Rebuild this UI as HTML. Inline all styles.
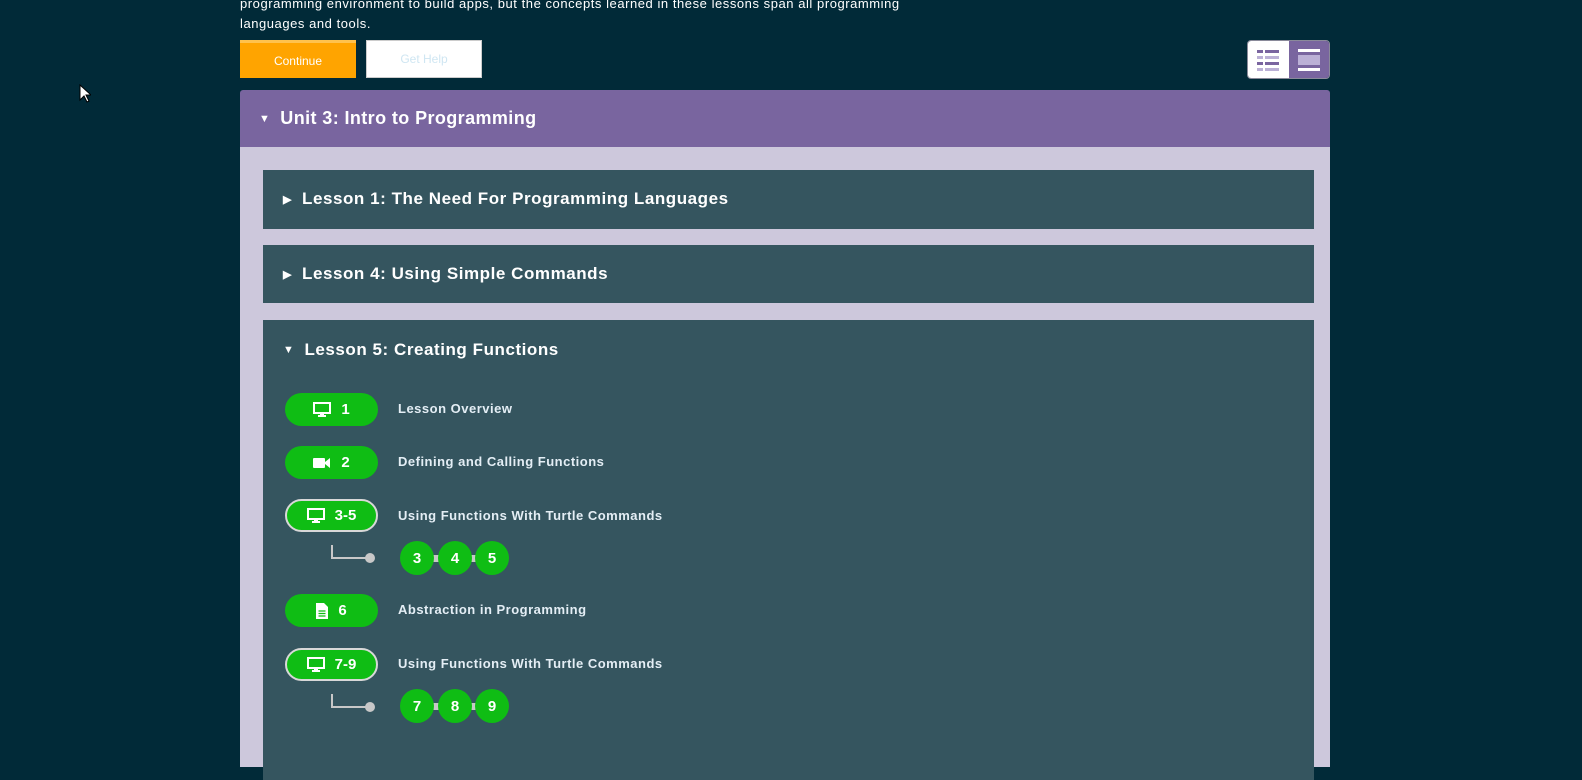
<!DOCTYPE html>
<html><head><style>
body{margin:0;width:1582px;height:745px;background:#012a38;font-family:"Liberation Sans",sans-serif;overflow:hidden;position:relative}
.abs{position:absolute}
.intro{left:240px;top:-6px;color:#fff;font-size:13px;line-height:20px;letter-spacing:.55px}
.btn{top:40px;height:38px;width:116px;box-sizing:border-box;font-size:12px;display:flex;align-items:center;justify-content:center}
.unit{left:240px;top:90px;width:1090px;height:57px;background:#79659f;border-radius:3px 3px 0 0;color:#fff;font-weight:bold;font-size:18px;display:flex;align-items:center;letter-spacing:.4px}
.body{left:240px;top:147px;width:1090px;height:620px;background:#cdc8dc}
.lesson{left:263px;width:1051px;background:#35555f;color:#fff;font-weight:bold;font-size:17px;letter-spacing:.55px}
.lh{display:flex;align-items:center;height:58px;padding-left:20px}
.pill{left:285px;width:93px;height:33px;box-sizing:border-box;border-radius:17px;background:#0fbd14;color:#fff;font-weight:bold;font-size:15px;display:flex;align-items:center;justify-content:center;gap:10px}
.pill.o{border:2px solid #d8d8d8}
.lt{left:398px;color:#e4eef5;font-weight:bold;font-size:13px;letter-spacing:.5px}
.c{width:34px;height:34px;border-radius:50%;background:#0fbd14;color:#fff;font-weight:bold;font-size:15px;display:flex;align-items:center;justify-content:center}
</style></head><body>
<div class="abs intro">programming environment to build apps, but the concepts learned in these lessons span all programming<br>languages and tools.</div>
<div class="abs btn" style="left:240px;background:#ffa400;border-top:3px solid #ffc24d;color:#fff">Continue</div>
<div class="abs btn" style="left:366px;background:#fff;border:1px solid #ccc;color:#cfe6f2">Get Help</div>
<div class="abs" style="left:1247px;top:40px;width:83px;height:39px;border-radius:4px;overflow:hidden;border:1px solid #8a8a9a;box-sizing:border-box;display:flex">
<div style="width:41px;background:#fff;position:relative">
<div class="abs" style="left:9px;top:9px;width:6px;height:3px;background:#7a65a0"></div><div class="abs" style="left:17px;top:9px;width:14px;height:3px;background:#7a65a0"></div>
<div class="abs" style="left:9px;top:15px;width:6px;height:3px;background:#bbb0d6"></div><div class="abs" style="left:17px;top:15px;width:14px;height:3px;background:#bbb0d6"></div>
<div class="abs" style="left:9px;top:21px;width:6px;height:3px;background:#7a65a0"></div><div class="abs" style="left:17px;top:21px;width:14px;height:3px;background:#7a65a0"></div>
<div class="abs" style="left:9px;top:27px;width:6px;height:3px;background:#bbb0d6"></div><div class="abs" style="left:17px;top:27px;width:14px;height:3px;background:#bbb0d6"></div>
</div>
<div style="flex:1;background:#79659f;position:relative">
<div class="abs" style="left:9px;top:8px;width:22px;height:3px;background:#fff"></div>
<div class="abs" style="left:9px;top:14px;width:22px;height:10px;background:#bbb0d6"></div>
<div class="abs" style="left:9px;top:27px;width:22px;height:3px;background:#fff"></div>
</div></div>
<div class="abs unit"><span style="font-size:11px;margin:0 10px 0 19px">▼</span>Unit 3: Intro to Programming</div>
<div class="abs body"></div>
<div class="abs lesson" style="top:170px;height:59px"><div class="lh"><span style="font-size:11px;margin-right:10px">▶</span>Lesson 1: The Need For Programming Languages</div></div>
<div class="abs lesson" style="top:245px;height:58px"><div class="lh"><span style="font-size:11px;margin-right:10px">▶</span>Lesson 4: Using Simple Commands</div></div>
<div class="abs lesson" style="top:320px;height:460px"><div class="lh" style="height:60px"><span style="font-size:11px;margin-right:10px">▼</span>Lesson 5: Creating Functions</div></div>
<svg width="0" height="0" style="position:absolute"><defs>
<symbol id="mon" viewBox="0 0 18 16"><rect x="1" y="1" width="16" height="10" fill="none" stroke="#fff" stroke-width="2"/><rect x="7" y="11" width="4" height="3" fill="#fff"/><rect x="5" y="13" width="8" height="2" fill="#fff"/></symbol>
<symbol id="cam" viewBox="0 0 18 14"><rect x="0" y="2" width="12" height="10" rx="1" fill="#fff"/><path d="M12 6 L17 2 V12 L12 8Z" fill="#fff"/></symbol>
<symbol id="doc" viewBox="0 0 12 16"><path d="M0 0H8L12 4V16H0Z" fill="#fff"/><path d="M2.5 8H9.5M2.5 10.5H9.5M2.5 13H9.5" stroke="#0fbd14" stroke-width="1.2"/></symbol>
</defs></svg>
<div class="abs pill" style="top:393px"><svg width="18" height="16"><use href="#mon"/></svg>1</div>
<div class="abs lt" style="top:401px">Lesson Overview</div>
<div class="abs pill" style="top:446px"><svg width="18" height="14"><use href="#cam"/></svg>2</div>
<div class="abs lt" style="top:454px">Defining and Calling Functions</div>
<div class="abs pill o" style="top:499px"><svg width="18" height="16"><use href="#mon"/></svg>3-5</div>
<div class="abs lt" style="top:508px">Using Functions With Turtle Commands</div>
<div class="abs pill" style="top:594px"><svg width="12" height="16"><use href="#doc"/></svg>6</div>
<div class="abs lt" style="top:602px">Abstraction in Programming</div>
<div class="abs pill o" style="top:648px"><svg width="18" height="16"><use href="#mon"/></svg>7-9</div>
<div class="abs lt" style="top:656px">Using Functions With Turtle Commands</div>
<div class="abs" style="left:331px;top:545px;width:38px;height:12px;border-left:2px solid #c8c8c8;border-bottom:2px solid #c8c8c8"></div>
<div class="abs" style="left:365px;top:553px;width:10px;height:10px;border-radius:50%;background:#c8c8c8"></div>
<div class="abs" style="left:420px;top:555px;width:70px;height:7px;background:#c8c8c8"></div>
<div class="abs c" style="left:400px;top:541px">3</div><div class="abs c" style="left:438px;top:541px">4</div><div class="abs c" style="left:475px;top:541px">5</div>
<div class="abs" style="left:331px;top:694px;width:38px;height:12px;border-left:2px solid #c8c8c8;border-bottom:2px solid #c8c8c8"></div>
<div class="abs" style="left:365px;top:702px;width:10px;height:10px;border-radius:50%;background:#c8c8c8"></div>
<div class="abs" style="left:420px;top:703px;width:70px;height:7px;background:#c8c8c8"></div>
<div class="abs c" style="left:400px;top:689px">7</div><div class="abs c" style="left:438px;top:689px">8</div><div class="abs c" style="left:475px;top:689px">9</div>
<svg class="abs" style="left:79px;top:84px" width="12" height="19"><path d="M1 1V16L5 12L8 18L10 17L7 11H12Z" fill="#fff" stroke="#000" stroke-width="1"/></svg>
</body></html>
